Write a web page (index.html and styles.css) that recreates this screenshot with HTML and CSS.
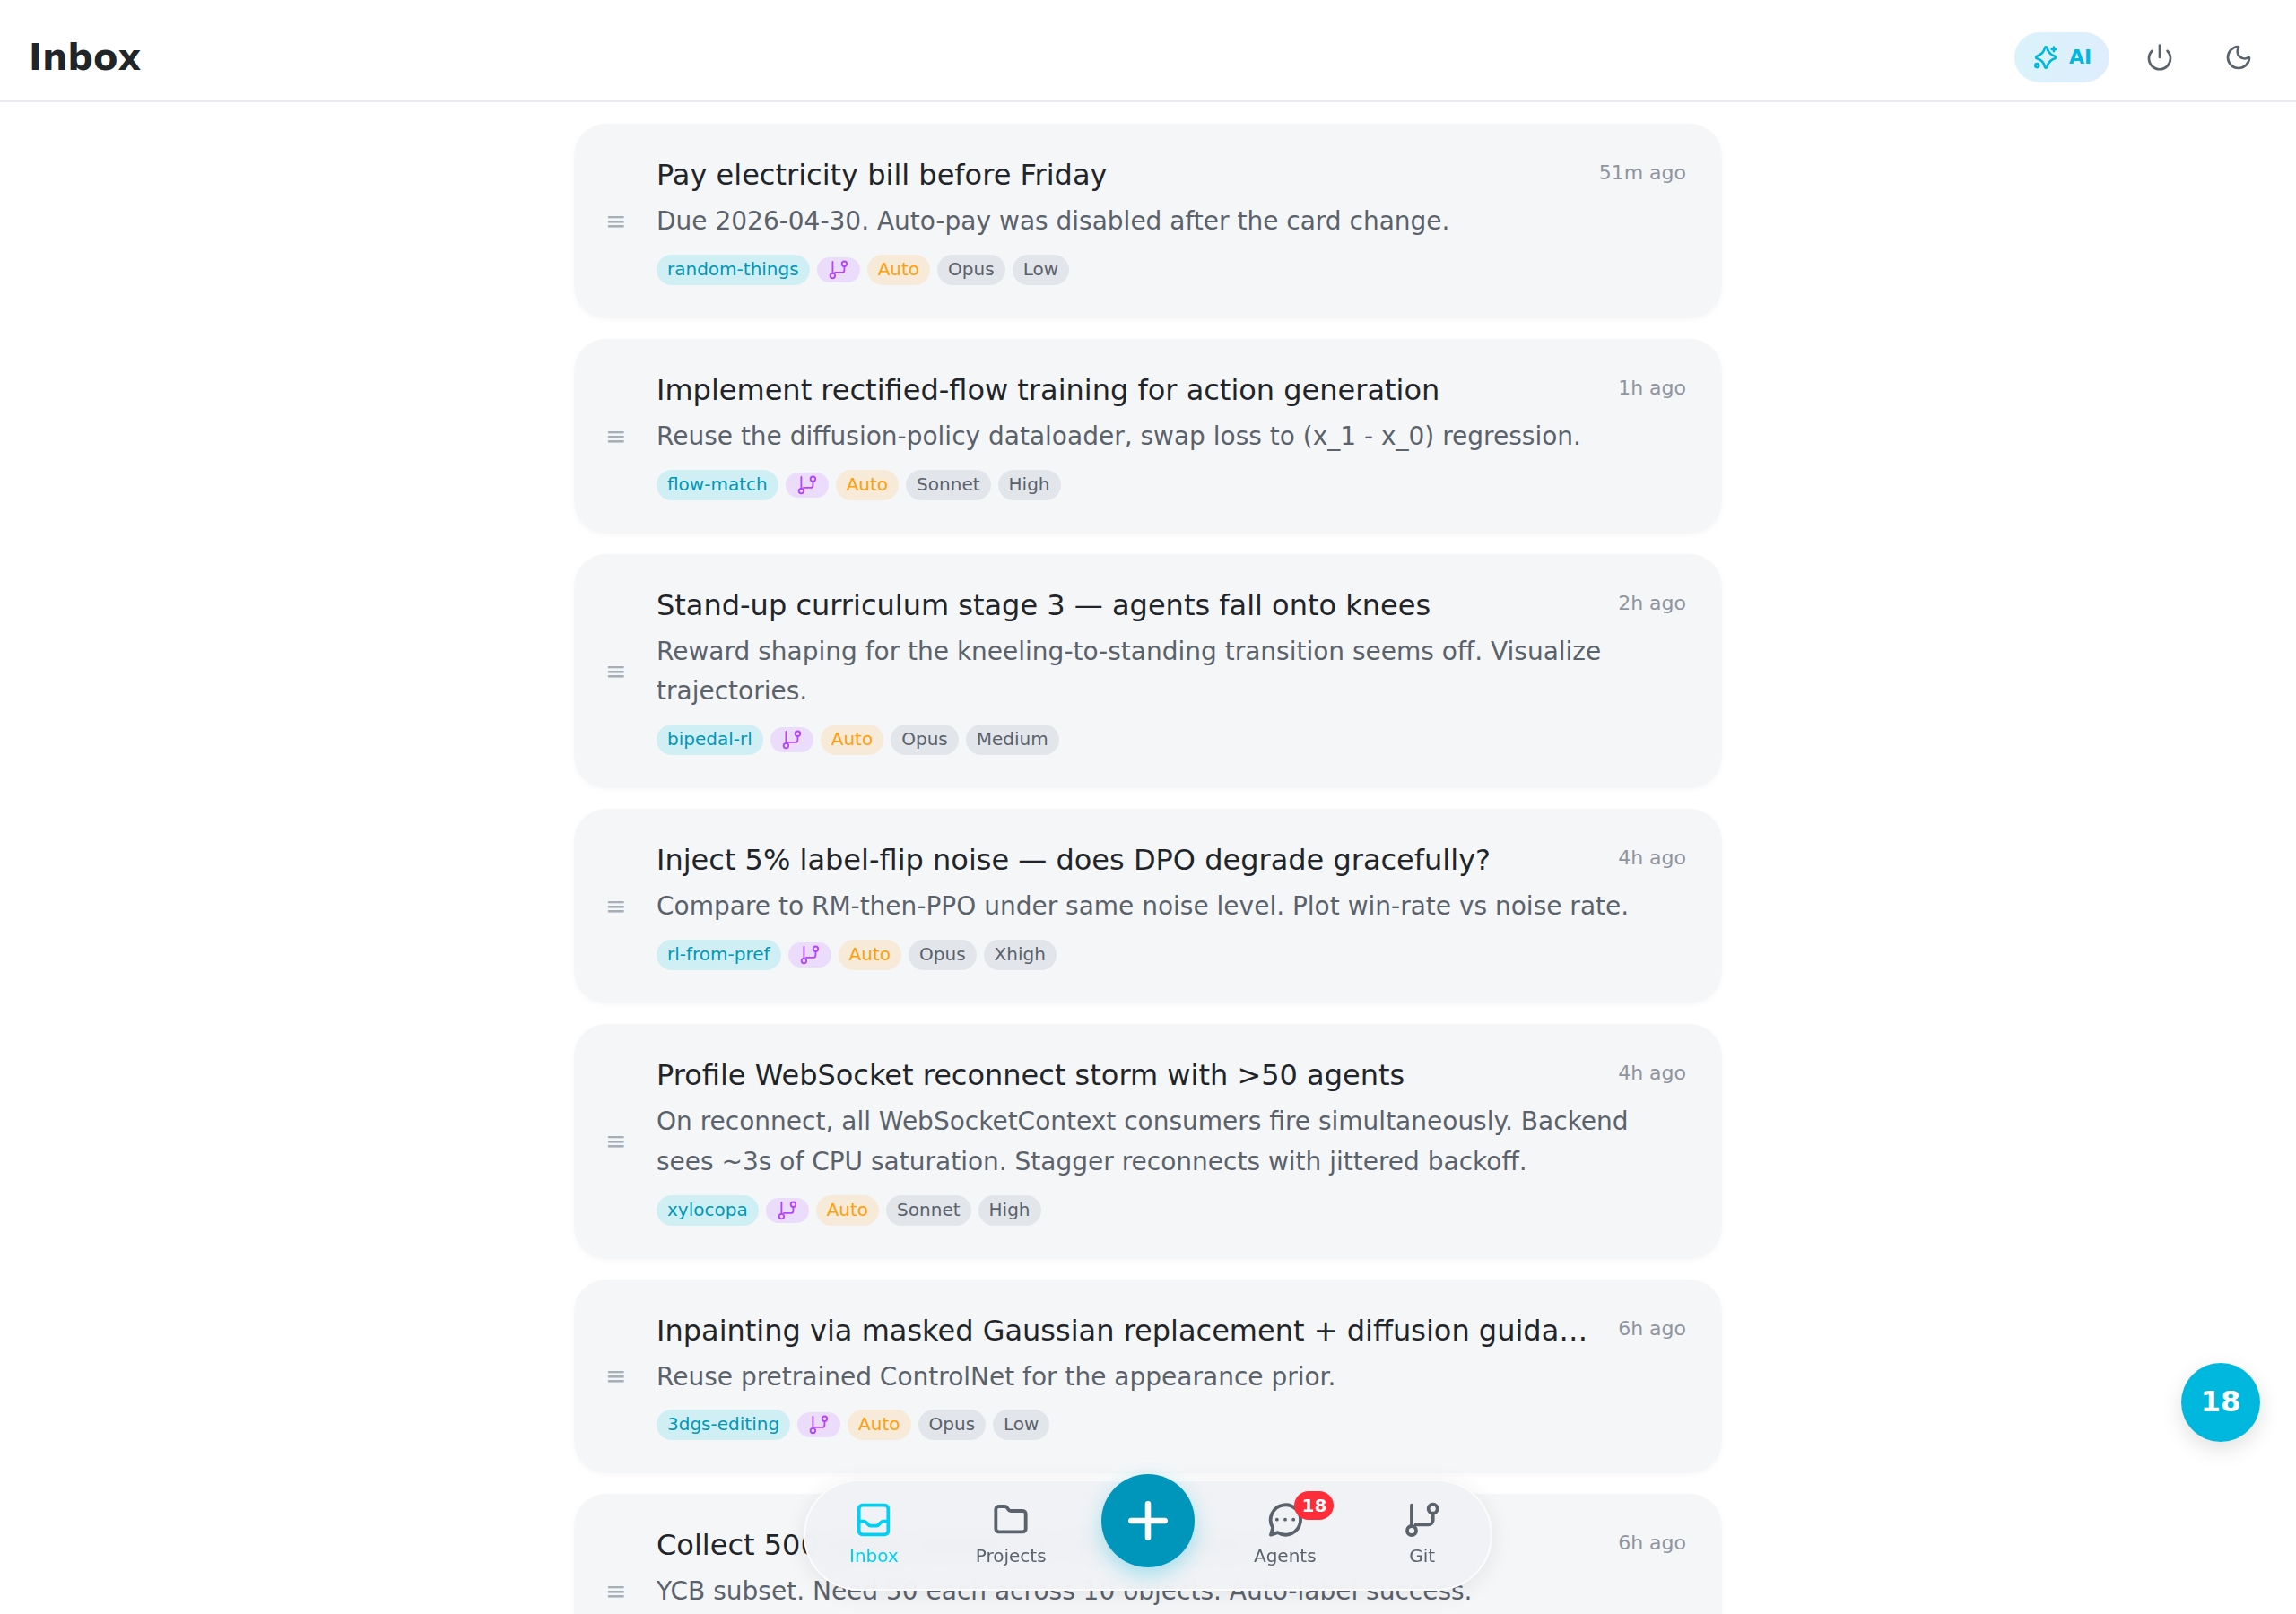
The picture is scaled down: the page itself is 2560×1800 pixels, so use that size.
FILE: index.html
```html
<!DOCTYPE html>
<html lang="en">
<head>
<meta charset="utf-8">
<title>Inbox</title>
<link rel="stylesheet" href="styles.css">
</head>
<body>
<svg class="defs" width="0" height="0" aria-hidden="true">
  <symbol id="git" viewBox="0 0 24 24"><path d="M4.8 2.2V16.2"/><circle cx="4.8" cy="19.2" r="3"/><circle cx="19" cy="4.6" r="3"/><path d="M19 7.6V12.2a3 3 0 0 1-3 3H7.6"/></symbol>
</svg>
<div class="app">
  <header class="topbar">
    <h1 class="page-title">Inbox</h1>
    <div class="top-actions">
      <button class="ai-pill">
        <svg class="icon-32" viewBox="0 0 24 24"><path d="M11.4 3.2c.5 0 .8.3.9.8.8 3.6 2.8 5.9 6.6 7 .5.2.8.5.8 1s-.3.8-.8 1c-3.8 1.1-5.8 3.4-6.6 7-.1.5-.4.8-.9.8s-.8-.3-.9-.8c-.8-3.6-2.8-5.9-6.6-7-.5-.2-.8-.5-.8-1s.3-.8.8-1c3.8-1.1 5.8-3.4 6.6-7 .1-.5.4-.8.9-.8z"/><circle cx="4" cy="18.8" r="1.5"/><path d="M18 3.5v3.4M16.3 5.2h3.4"/></svg>
        <span class="ai-label">AI</span>
      </button>
      <button class="icon-btn"><svg class="icon-32" viewBox="0 0 24 24"><path d="M12 2v10"/><path d="M18.4 6.6a9 9 0 1 1-12.8 0"/></svg></button>
      <button class="icon-btn"><svg class="icon-32" viewBox="0 0 24 24"><path d="M20.985 12.486a9 9 0 1 1-9.473-9.472c.405-.022.617.46.402.803a6 6 0 0 0 8.268 8.268c.344-.215.825-.004.803.401"/></svg></button>
    </div>
  </header>
  <main class="list">
    <article class="card">
      <div class="handle">≡</div>
      <div class="card-body">
        <div class="card-head"><h2 class="card-title">Pay electricity bill before Friday</h2><time class="age">51m ago</time></div>
        <p class="card-desc">Due 2026-04-30. Auto-pay was disabled after the card change.</p>
        <div class="tags"><span class="tag tag-project">random-things</span><span class="tag tag-git"><svg class="icon-22"><use href="#git"/></svg></span><span class="tag tag-auto">Auto</span><span class="tag">Opus</span><span class="tag">Low</span></div>
      </div>
    </article>
    <article class="card">
      <div class="handle">≡</div>
      <div class="card-body">
        <div class="card-head"><h2 class="card-title">Implement rectified-flow training for action generation</h2><time class="age">1h ago</time></div>
        <p class="card-desc">Reuse the diffusion-policy dataloader, swap loss to (x_1 - x_0) regression.</p>
        <div class="tags"><span class="tag tag-project">flow-match</span><span class="tag tag-git"><svg class="icon-22"><use href="#git"/></svg></span><span class="tag tag-auto">Auto</span><span class="tag">Sonnet</span><span class="tag">High</span></div>
      </div>
    </article>
    <article class="card">
      <div class="handle">≡</div>
      <div class="card-body">
        <div class="card-head"><h2 class="card-title">Stand-up curriculum stage 3 — agents fall onto knees</h2><time class="age">2h ago</time></div>
        <p class="card-desc">Reward shaping for the kneeling-to-standing transition seems off. Visualize trajectories.</p>
        <div class="tags"><span class="tag tag-project">bipedal-rl</span><span class="tag tag-git"><svg class="icon-22"><use href="#git"/></svg></span><span class="tag tag-auto">Auto</span><span class="tag">Opus</span><span class="tag">Medium</span></div>
      </div>
    </article>
    <article class="card">
      <div class="handle">≡</div>
      <div class="card-body">
        <div class="card-head"><h2 class="card-title">Inject 5% label-flip noise — does DPO degrade gracefully?</h2><time class="age">4h ago</time></div>
        <p class="card-desc">Compare to RM-then-PPO under same noise level. Plot win-rate vs noise rate.</p>
        <div class="tags"><span class="tag tag-project">rl-from-pref</span><span class="tag tag-git"><svg class="icon-22"><use href="#git"/></svg></span><span class="tag tag-auto">Auto</span><span class="tag">Opus</span><span class="tag">Xhigh</span></div>
      </div>
    </article>
    <article class="card">
      <div class="handle">≡</div>
      <div class="card-body">
        <div class="card-head"><h2 class="card-title">Profile WebSocket reconnect storm with &gt;50 agents</h2><time class="age">4h ago</time></div>
        <p class="card-desc">On reconnect, all WebSocketContext consumers fire simultaneously. Backend sees ~3s of CPU saturation. Stagger reconnects with jittered backoff.</p>
        <div class="tags"><span class="tag tag-project">xylocopa</span><span class="tag tag-git"><svg class="icon-22"><use href="#git"/></svg></span><span class="tag tag-auto">Auto</span><span class="tag">Sonnet</span><span class="tag">High</span></div>
      </div>
    </article>
    <article class="card">
      <div class="handle">≡</div>
      <div class="card-body">
        <div class="card-head"><h2 class="card-title">Inpainting via masked Gaussian replacement + diffusion guidance for object removal</h2><time class="age">6h ago</time></div>
        <p class="card-desc">Reuse pretrained ControlNet for the appearance prior.</p>
        <div class="tags"><span class="tag tag-project">3dgs-editing</span><span class="tag tag-git"><svg class="icon-22"><use href="#git"/></svg></span><span class="tag tag-auto">Auto</span><span class="tag">Opus</span><span class="tag">Low</span></div>
      </div>
    </article>
    <article class="card">
      <div class="handle">≡</div>
      <div class="card-body">
        <div class="card-head"><h2 class="card-title">Collect 500 grasp demos on the tabletop rig</h2><time class="age">6h ago</time></div>
        <p class="card-desc">YCB subset. Need 50 each across 10 objects. Auto-label success.</p>
        <div class="tags"><span class="tag tag-project">grasping</span><span class="tag tag-git"><svg class="icon-22"><use href="#git"/></svg></span><span class="tag tag-auto">Auto</span><span class="tag">Opus</span><span class="tag">Low</span></div>
      </div>
    </article>
  </main>
  <button class="float-count">18</button>
  <nav class="bottom-nav">
    <a class="nav-item active">
      <svg class="icon-40" viewBox="0 0 24 24"><rect x="2.2" y="2.2" width="19.6" height="19.6" rx="2.4"/><path d="M2.5 13h3c1 0 1.6.6 2.3 1.4.6.8 1.2 1.6 2.3 1.6h3.8c1 0 1.7-.8 2.3-1.6.7-.8 1.3-1.4 2.3-1.4h3"/></svg>
      <span>Inbox</span>
    </a>
    <a class="nav-item">
      <svg class="icon-40" viewBox="0 0 24 24"><path d="M20 20a2 2 0 0 0 2-2V8a2 2 0 0 0-2-2h-7.9a2 2 0 0 1-1.69-.9L9.6 3.9A2 2 0 0 0 7.93 3H4a2 2 0 0 0-2 2v13a2 2 0 0 0 2 2Z"/></svg>
      <span>Projects</span>
    </a>
    <div class="nav-slot">
      <button class="fab"><svg class="icon-56" viewBox="0 0 24 24"><path d="M12 4v16M4 12h16"/></svg></button>
    </div>
    <a class="nav-item">
      <svg class="icon-40" viewBox="0 0 24 24"><path d="M7 20.5A10 10 0 1 0 3.7 17.2L2.4 22Z"/><path d="M6.5 11.8h.01M12 11.8h.01M17.5 11.8h.01"/></svg>
      <span>Agents</span>
      <b class="nav-badge">18</b>
    </a>
    <a class="nav-item">
      <svg class="icon-40"><use href="#git"/></svg>
      <span>Git</span>
    </a>
  </nav>
</div>
</body>
</html>
```
FILE: styles.css
```css
* { box-sizing: border-box; }
html, body { margin: 0; height: 100%; }
body { font-family: "DejaVu Sans", sans-serif; background: #fff; color: #212529; overflow: hidden; }
.defs { position: absolute; }
svg { fill: none; stroke: currentColor; stroke-width: 2; stroke-linecap: round; stroke-linejoin: round; display: block; }
button { font: inherit; border: 0; background: none; padding: 0; color: inherit; }

.app { height: 100vh; display: flex; flex-direction: column; overflow: hidden; position: relative; }
.topbar { flex: none; height: 114px; border-bottom: 2px solid #e9eaef; display: flex; align-items: center; justify-content: space-between; padding: 16px 32px 0; }
.page-title { margin: 0; font-size: 40px; font-weight: 700; line-height: 1; }
.top-actions { display: flex; align-items: center; gap: 24px; }
.ai-pill { width: 106px; height: 56px; border-radius: 28px; background: linear-gradient(90deg, #daf3fb, #dfedfd); color: #00b8de; display: flex; align-items: center; justify-content: center; gap: 9px; font-size: 22px; font-weight: 700; }
.ai-label { padding-bottom: 2px; }
.icon-btn { width: 64px; height: 64px; display: flex; align-items: center; justify-content: center; color: #5a626c; }
.icon-22 { width: 22px; height: 22px; }
.icon-32 { width: 32px; height: 32px; }
.icon-40 { width: 40px; height: 40px; stroke-width: 2.3; }
.icon-56 { width: 56px; height: 56px; stroke-width: 2.8; }

.list { flex: 1; min-height: 0; width: 1280px; margin: 0 auto; padding-top: 24px; display: flex; flex-direction: column; gap: 23px; }
.card { flex: none; display: flex; align-items: center; background: #f5f6f8; border-radius: 36px; padding: 35px 40px 37px 35px; box-shadow: 0 2px 6px rgba(0, 0, 0, .03); }
.handle { flex: none; width: 20px; margin: 3px 37px 0 0; font-size: 28px; line-height: 1; color: #a6aeb8; text-align: center; }
.card-body { flex: 1; min-width: 0; }
.card-head { display: flex; align-items: flex-start; justify-content: space-between; gap: 32px; }
.card-title { margin: 0; min-width: 0; font-size: 32px; font-weight: 400; line-height: 45px; color: #212529; white-space: nowrap; overflow: hidden; text-overflow: ellipsis; }
.age { flex: none; font-size: 22px; line-height: 40px; color: #8e959e; }
.card-desc { margin: 7px 0 0; font-size: 28px; line-height: 1.6; color: #5a626c; }
.tags { display: flex; align-items: center; gap: 8px; margin-top: 14px; }
.tag { height: 34px; display: flex; align-items: center; padding: 0 12px 2px; border-radius: 17px; font-size: 20px; background: #e2e5ea; color: #5a626c; }
.tag-project { background: #d0eff5; color: #0097b8; }
.tag-git { height: 28px; border-radius: 14px; padding: 0 13px; background: #ecdcfb; color: #b444ff; }
.tag-auto { background: #f8ead8; color: #ff9f0a; }

.float-count { position: absolute; left: 2432px; top: 1520px; width: 88px; height: 88px; border-radius: 50%; padding-bottom: 2px; background: #00b8de; color: #fff; font-size: 32px; font-weight: 700; box-shadow: 0 8px 24px rgba(0, 0, 0, .12); }

.bottom-nav { position: absolute; left: 896px; top: 1650px; width: 768px; height: 124px; border-radius: 62px; border: 2px solid rgba(255, 255, 255, .7); background: rgba(240, 241, 245, .96); backdrop-filter: blur(12px); box-shadow: 0 4px 24px rgba(0, 0, 0, .08); display: grid; grid-template-columns: repeat(5, 1fr); align-items: center; }
.nav-item { position: relative; display: flex; flex-direction: column; align-items: center; gap: 8px; margin-top: -2px; font-size: 20px; color: #5a626c; }
.nav-item.active { color: #00d0f5; }
.nav-slot { display: flex; justify-content: center; margin-top: -32px; }
.fab { width: 104px; height: 104px; border-radius: 50%; background: #0096bc; color: #fff; display: flex; align-items: center; justify-content: center; box-shadow: 0 8px 24px rgba(0, 184, 222, .35); }
.nav-badge { position: absolute; left: 87px; top: -12px; height: 32px; min-width: 44px; padding: 0 6px; border-radius: 16px; background: #ff2d3a; color: #fff; font-size: 20px; line-height: 32px; text-align: center; }
```
